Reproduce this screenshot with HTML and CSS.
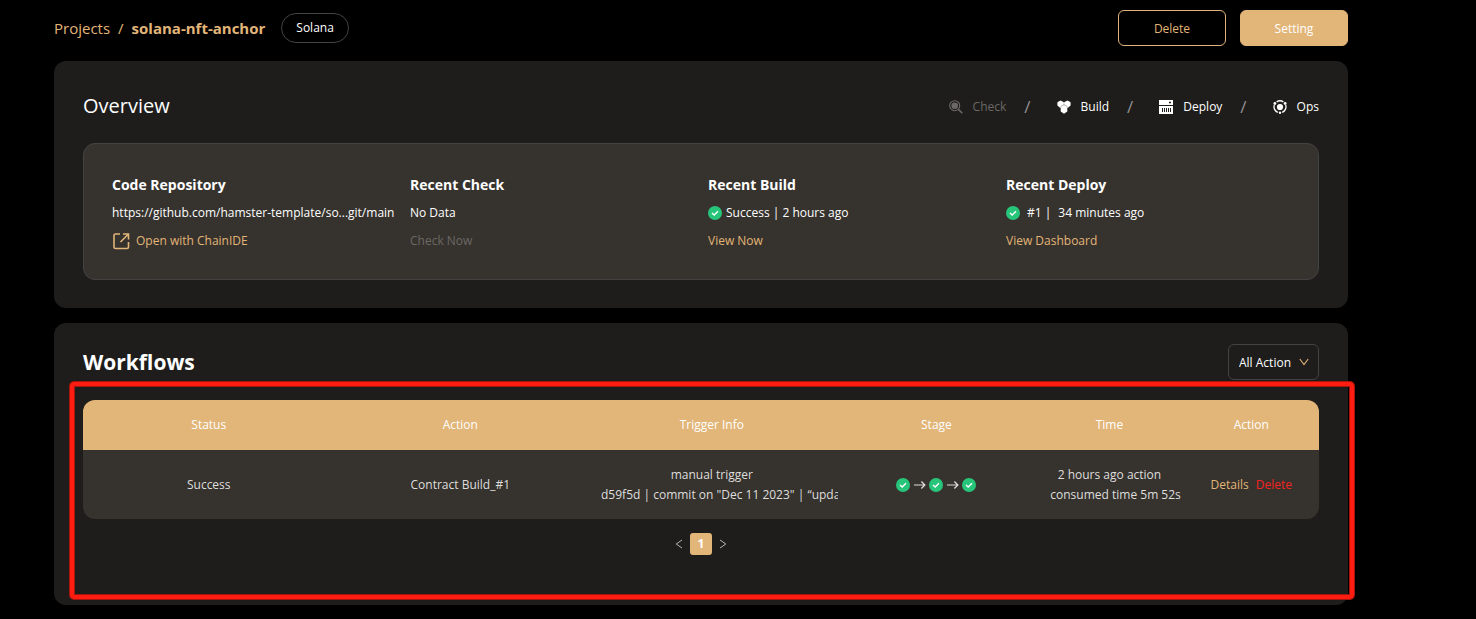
FILE: index.html
```html
<!DOCTYPE html>
<html lang="en">
<head>
<meta charset="utf-8">
<title>solana-nft-anchor</title>
<link rel="stylesheet" href="styles.css">
</head>
<body>
<svg class="sprite" aria-hidden="true">
  <symbol id="ok" viewBox="0 0 14 14"><circle cx="7" cy="7" r="7" fill="#27c57a"/><path d="M4 7.1 6.2 9.1 10 5.3" fill="none" stroke="#fff" stroke-width="1.4"/></symbol>
  <symbol id="arrow" viewBox="0 0 14 10"><path d="M1 5H12.5M9 1.2 12.8 5 9 8.8" fill="none" stroke="#dededd" stroke-width="1.3"/></symbol>
</svg>
<main class="page">
  <header class="topbar">
    <nav class="crumbs" aria-label="Breadcrumb">
      <a href="#">Projects</a><span>/</span><strong>solana-nft-anchor</strong>
    </nav>
    <span class="tag">Solana</span>
    <div class="topbar-actions">
      <button class="btn btn-outline" type="button">Delete</button>
      <button class="btn btn-solid" type="button">Setting</button>
    </div>
  </header>

  <section class="panel overview">
    <div class="overview-head">
      <h1>Overview</h1>
      <ol class="steps">
        <li class="step muted"><svg viewBox="0 0 14 14"><circle cx="5.7" cy="5.7" r="5" fill="none" stroke="currentColor" stroke-width="1.1"/><circle cx="5.7" cy="5.7" r="3.3" fill="currentColor"/><path d="m9.4 9.4 3.9 3.9" stroke="currentColor" stroke-width="1.5"/></svg>Check</li>
        <li class="step"><svg viewBox="0 0 14 14" fill="currentColor"><path d="M3.5.6 6.6 2 7 3l.4-1L10.5.6 13.6 2.2V5.6L11.3 7.6 10.3 8V11.5L7 13.7 3.7 11.5V8L2.7 7.6.4 5.6V2.2Z"/><path d="m7 3.6v1.5M3.9 7.6V6.3L7 4.7l3.1 1.6v1.3" fill="none" stroke="#8d8c8a" stroke-width=".6"/></svg>Build</li>
        <li class="step"><svg viewBox="0 0 14 14"><path d="M0 0h14v5H0ZM0 6h14v8H0Z" fill="currentColor"/><path d="M10 2.5h2M11 1.5v2M3.5 8v4M5.5 8v4M7.5 8v4M9.5 8v4M11.5 8v4" stroke="#1e1d1b" stroke-width="1"/></svg>Deploy</li>
        <li class="step"><svg viewBox="0 0 14 14"><circle cx="7" cy="7" r="3.1" fill="currentColor"/><path d="M3.6 1.9a6 6 0 0 1 6.8 0M12.7 5a6 6 0 0 1-3.5 7.4M4.8 12.4A6 6 0 0 1 1.3 5" fill="none" stroke="currentColor" stroke-width="1.3"/><g fill="currentColor"><circle cx="1.9" cy="3.5" r="1.4"/><circle cx="12.1" cy="3.5" r="1.4"/><circle cx="7" cy="12.7" r="1.2"/></g></svg>Ops</li>
      </ol>
    </div>
    <div class="summary">
      <div class="fact">
        <h2>Code Repository</h2>
        <p>https://github.com/hamster-template/so...git/main</p>
        <a class="with-icon" href="#"><svg class="open" viewBox="0 0 18 18" fill="none" stroke="currentColor" stroke-width="1.6"><path d="M8 2H3.5Q2 2 2 3.5V15q0 1.5 1.5 1.5H15q1.5 0 1.5-1.5V10M11 2h5.5v5.5M16.5 2 8.5 10"/></svg>Open with ChainIDE</a>
      </div>
      <div class="fact">
        <h2>Recent Check</h2>
        <p>No Data</p>
        <span class="muted">Check Now</span>
      </div>
      <div class="fact">
        <h2>Recent Build</h2>
        <p class="state"><svg class="ok"><use href="#ok"/></svg>Success | 2 hours ago</p>
        <a href="#">View Now</a>
      </div>
      <div class="fact">
        <h2>Recent Deploy</h2>
        <p class="state state-deploy"><svg class="ok"><use href="#ok"/></svg><span>#1 |</span><span>34 minutes ago</span></p>
        <a href="#">View Dashboard</a>
      </div>
    </div>
  </section>

  <section class="panel workflows">
    <div class="workflows-head">
      <h1>Workflows</h1>
      <div class="filter">
        <select aria-label="Filter by action"><option>All Action</option></select>
        <svg viewBox="0 0 10 8"><path d="M.8 1 5 6.5 9.2 1" fill="none" stroke="#e2b578" stroke-width="1.1"/></svg>
      </div>
    </div>
    <table class="runs">
      <colgroup><col class="c-wide"><col class="c-wide"><col class="c-wide"><col class="c-stage"><col class="c-time"><col class="c-action"></colgroup>
      <thead><tr><th>Status</th><th>Action</th><th>Trigger Info</th><th>Stage</th><th>Time</th><th>Action</th></tr></thead>
      <tbody>
        <tr>
          <td>Success</td>
          <td>Contract Build_#1</td>
          <td class="trigger"><div>manual trigger</div><div class="commit">d59f5d | commit on "Dec 11 2023" | “update</div></td>
          <td><div class="stages"><svg class="ok"><use href="#ok"/></svg><svg class="arrow"><use href="#arrow"/></svg><svg class="ok"><use href="#ok"/></svg><svg class="arrow"><use href="#arrow"/></svg><svg class="ok"><use href="#ok"/></svg></div></td>
          <td class="time">2 hours ago action<br>consumed time 5m 52s</td>
          <td class="ops"><div class="links"><a href="#">Details</a><a class="danger" href="#">Delete</a></div></td>
        </tr>
      </tbody>
    </table>
    <nav class="pager" aria-label="Pages">
      <button type="button" aria-label="Previous"><svg viewBox="0 0 8 10"><path d="M7 1 1.2 5 7 9"/></svg></button>
      <button class="current" type="button">1</button>
      <button type="button" aria-label="Next"><svg viewBox="0 0 8 10"><path d="m1 1 5.8 4L1 9"/></svg></button>
    </nav>
    <div class="highlight"></div>
  </section>
</main>
</body>
</html>
```
FILE: styles.css
```css
* { box-sizing: border-box; }
body {
  margin: 0;
  background: #000;
  color: #fff;
  font: 12px/20px "Open Sans", "Noto Sans", sans-serif;
}
h1, h2, p, ol { margin: 0; padding: 0; }
a { color: #e2b578; text-decoration: none; }
button, select { font: inherit; color: inherit; }
.sprite { display: none; }
.page { padding: 10px 128px 14px 54px; }

.topbar { display: flex; align-items: center; }
.crumbs { display: flex; gap: 8px; font-size: 15px; color: #e2b578; }
.tag {
  margin-left: 16px;
  padding: 4px 14px;
  border: 1px solid #434343;
  border-radius: 15px;
}
.topbar-actions { display: flex; gap: 14px; margin-left: auto; }
.btn {
  width: 108px;
  height: 36px;
  padding: 1px 0 0;
  border: 1px solid #e2b578;
  border-radius: 6px;
}
.btn-outline { background: transparent; color: #e2b578; }
.btn-solid { background: #e2b578; }

.panel { margin-top: 15px; border-radius: 12px; background: #1e1d1b; }
.overview { padding: 28px 29px; }
.overview-head { display: flex; justify-content: space-between; align-items: center; margin-bottom: 20px; }
h1 { font-size: 20px; line-height: 34px; font-weight: 400; }
.steps { display: flex; padding-top: 2px; list-style: none; }
.step { display: flex; align-items: center; gap: 10px; }
.step svg { width: 14px; height: 14px; }
.step + .step::before { content: "/"; margin: 0 16px 0 18px; font-size: 17px; color: #929190; }
.muted { color: #6b6865; }
.summary {
  display: grid;
  grid-template-columns: repeat(4, minmax(0, 1fr));
  padding: 27px 14px 24px 28px;
  border: 1px solid #434343;
  border-radius: 12px;
  background: #36322d;
}
.fact { line-height: 28px; white-space: nowrap; }
.fact h2 { font-size: 14px; font-weight: 700; line-height: 28px; }
.with-icon { display: flex; align-items: center; gap: 6px; }
.open { width: 18px; height: 18px; }
.ok { width: 14px; height: 14px; flex: none; }
.state { display: flex; align-items: center; gap: 4px; }
.state-deploy { gap: 7px; }

.workflows { position: relative; padding: 21px 29px 50px; }
.workflows-head { display: flex; justify-content: space-between; align-items: center; margin-bottom: 20px; }
.workflows-head h1 { font-size: 21px; font-weight: 700; }
.filter { position: relative; }
.filter select {
  display: block;
  width: 91px;
  height: 36px;
  padding: 1px 0 0 10px;
  border: 1px solid #434343;
  border-radius: 6px;
  background: transparent;
  appearance: none;
}
.filter svg { position: absolute; right: 10px; top: 14px; width: 10px; height: 8px; pointer-events: none; }

.runs {
  width: 100%;
  table-layout: fixed;
  border-collapse: separate;
  border-spacing: 0;
  border-radius: 12px;
  overflow: hidden;
  background: #36322d;
  text-align: center;
}
.c-wide { width: 20.35%; }
.c-stage { width: 16%; }
.c-time { width: 12%; }
.runs th { height: 50px; padding: 0; background: #e2b578; font-weight: 400; }
.runs td { height: 69px; padding: 0 15px; color: #dededd; white-space: nowrap; }
.runs .trigger { overflow: hidden; }
.commit { text-align: left; }
.runs .ops { padding: 0; }
.stages { display: flex; justify-content: center; align-items: center; gap: 3px; }
.arrow { width: 13px; height: 10px; }
.links { display: flex; justify-content: center; gap: 7px; }
.runs .danger { color: #f52222; }

.pager { display: flex; justify-content: center; gap: 2px; margin-top: 14px; }
.pager button {
  display: flex;
  align-items: center;
  justify-content: center;
  width: 18px;
  height: 22px;
  padding: 0;
  border: 0;
  border-radius: 3px;
  background: none;
}
.pager .current { width: 22px; background: #e2b578; font-weight: 700; }
.pager svg { width: 8px; height: 10px; fill: none; stroke: #b5b4b3; }

.highlight {
  position: absolute;
  inset: 59px -6px 6px 16px;
  border: 4px solid #ff1c10;
  border-radius: 4px;
  box-shadow: 0 0 0 1px #a3150e, inset 0 0 0 1px #a3150e;
  pointer-events: none;
}
```
